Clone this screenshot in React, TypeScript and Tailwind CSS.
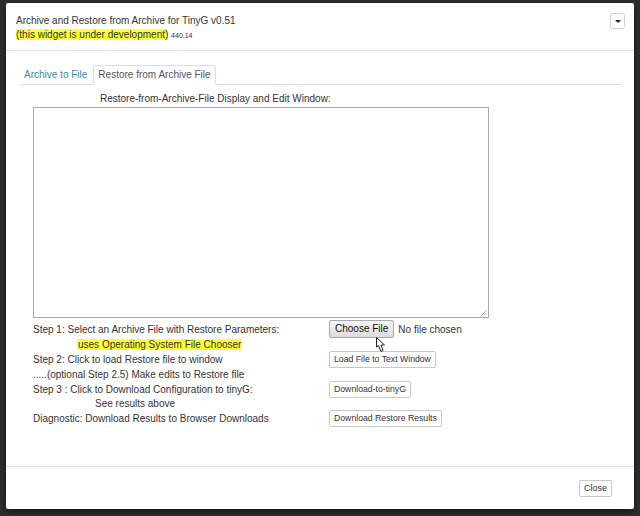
import React from "react";

const font = { fontFamily: '"Liberation Sans", Arial, sans-serif' };

const SmallBtn: React.FC<{ label: string }> = ({ label }) => (
  <button className="h-[17px] px-[4px] -my-[1px] border border-[#c8c8c8] rounded-[2px] bg-white text-[8.7px] text-[#333] leading-none whitespace-nowrap">
    {label}
  </button>
);

const HandCursor: React.FC = () => (
  <svg
    width="13"
    height="18"
    viewBox="0 0 13 18"
    className="absolute left-[45px] top-[14px]"
  >
    <path
      d="M2.5 1.5 L2.5 11 L4.5 9.5 L7 15.5 L9 14.5 L7 9 L10.5 9 Z"
      fill="#fff"
      stroke="#222"
      strokeWidth="1"
      strokeLinejoin="round"
    />
  </svg>
);

export default function App() {
  const rows: { text: React.ReactNode; right?: React.ReactNode; indent?: string }[] = [
    {
      text: "Step 1: Select an Archive File with Restore Parameters:",
      right: (
        <div className="relative flex items-center gap-[4px]">
          <button className="h-[18px] px-[5px] -my-[2px] border border-[#a9a9a9] rounded-[2px] bg-gradient-to-b from-[#f6f6f6] to-[#dcdcdc] text-[10px] text-[#111] leading-none">
            Choose File
          </button>
          <span className="text-[10px] text-[#333]">No file chosen</span>
          <HandCursor />
        </div>
      ),
    },
    {
      text: (
        <span className="bg-[#ffff33] text-[#333] px-[1px]">
          uses Operating System File Chooser
        </span>
      ),
      indent: "pl-[44px]",
    },
    { text: "Step 2: Click to load Restore file to window", right: <SmallBtn label="Load File to Text Window" /> },
    { text: ".....(optional Step 2.5) Make edits to Restore file" },
    { text: "Step 3 : Click to Download Configuration to tinyG:", right: <SmallBtn label="Download-to-tinyG" /> },
    { text: "See results above", indent: "pl-[62px]" },
    { text: "Diagnostic: Download Results to Browser Downloads", right: <SmallBtn label="Download Restore Results" /> },
  ];

  return (
    <div className="w-[640px] h-[516px] bg-[#2e2e2e] pt-[3px] pl-[6px]" style={font}>
      <div className="w-[628px] h-[506px] bg-white rounded-[2px] flex flex-col shadow-[0_2px_6px_rgba(0,0,0,0.6)]">
        {/* header */}
        <div className="h-[48px] border-b border-[#e5e5e5] px-[10px] pt-[11px] flex justify-between">
          <div className="text-[10px] text-[#333] leading-[14px]">
            <div>Archive and Restore from Archive for TinyG v0.51</div>
            <div>
              <span className="bg-[#ffff33]">(this widget is under development)</span>{" "}
              <span className="text-[7px]">440.14</span>
            </div>
          </div>
          <button className="w-[15px] h-[16px] -mt-[1px] mr-[-1px] border border-[#d0d0d0] rounded-[3px] bg-white flex items-center justify-center">
            <span className="w-0 h-0 border-l-[3px] border-r-[3px] border-t-[3px] border-l-transparent border-r-transparent border-t-[#222]" />
          </button>
        </div>

        {/* body */}
        <div className="flex-1 pl-[14px] pr-[12px] pt-[14px]">
          <div className="flex items-end border-b border-[#ddd] h-[20px]">
            <div className="px-[4px] text-[10px] text-[#3d8aa8] leading-[18px]">Archive to File</div>
            <div className="ml-[2px] h-[20px] px-[4px] border border-[#ddd] border-b-white -mb-[1px] rounded-t-[3px] bg-white text-[10px] text-[#555] leading-[18px]">
              Restore from Archive File
            </div>
          </div>

          <div className="pl-[80px] pt-[8px] text-[10px] text-[#333] leading-[12px]">
            Restore-from-Archive-File Display and Edit Window:
          </div>

          <div className="ml-[13px] mt-[2px] w-[456px] h-[211px] border border-[#a9a9a9] relative">
            <svg width="6" height="6" viewBox="0 0 6 6" className="absolute right-[1px] bottom-[1px]">
              <path d="M5.5 0.5 L0.5 5.5 M5.5 3 L3 5.5" stroke="#999" strokeWidth="0.8" />
            </svg>
          </div>

          <div className="ml-[13px] mt-[4px] flex flex-col">
            {rows.map((r, i) => (
              <div key={i} className="flex items-center h-[14.9px]">
                <div className={`w-[296px] text-[10px] text-[#333] whitespace-nowrap ${r.indent ?? ""}`}>{r.text}</div>
                {r.right}
              </div>
            ))}
          </div>
        </div>

        {/* footer */}
        <div className="h-[43px] border-t border-[#e5e5e5] flex items-center justify-end pr-[22px]">
          <button className="h-[17px] px-[4px] border border-[#c8c8c8] rounded-[2px] bg-white text-[9px] text-[#333] leading-none">
            Close
          </button>
        </div>
      </div>
    </div>
  );
}
